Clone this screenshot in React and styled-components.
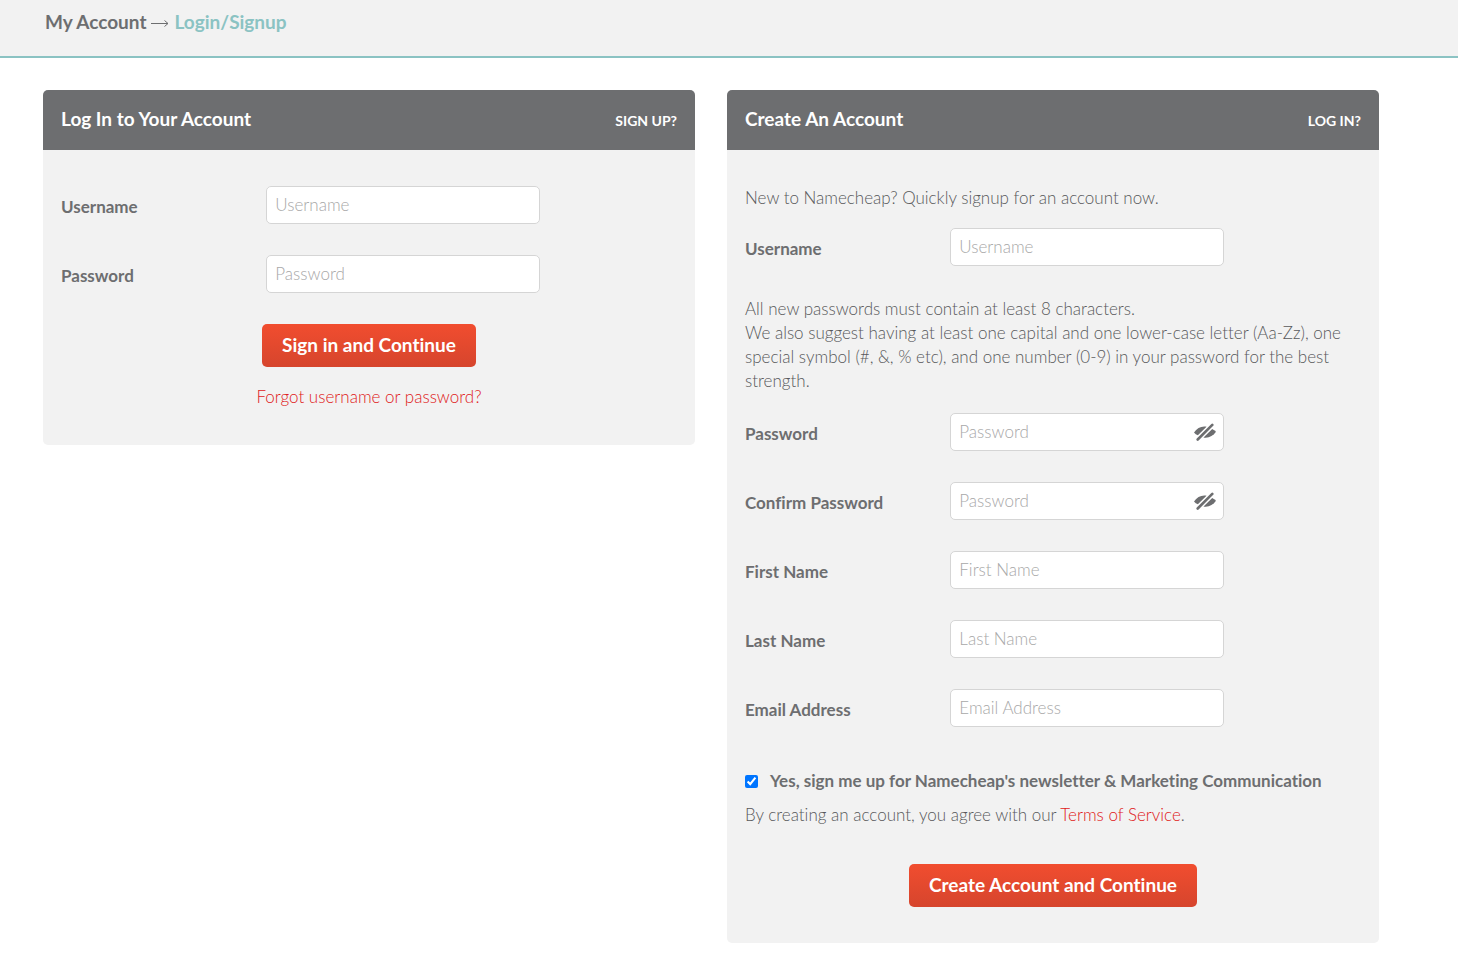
import React, { useState } from "react";
import styled, { createGlobalStyle, ThemeProvider } from "styled-components";

const theme = {
  colors: {
    text: "#6d6e70",
    copy: "#58595b",
    teal: "#8bc3c3",
    panel: "#f2f2f2",
    link: "#e02020",
    border: "#d5d5d5",
    placeholder: "#a8a8a8",
  },
};

const GlobalStyle = createGlobalStyle`
  * {
    box-sizing: border-box;
  }

  body {
    margin: 0;
    background: #ffffff;
    color: #6d6e70;
    font-family: Lato, "Open Sans", sans-serif;
    font-size: 17px;
    font-weight: 300;
    font-variant-ligatures: none;
    line-height: 24px;
  }
`;

const TopBar = styled.header`
  padding: 10px 45px 22px;
  background-color: ${(p) => p.theme.colors.panel};
  border-bottom: 2px solid ${(p) => p.theme.colors.teal};
`;

const Breadcrumb = styled.h1`
  margin: 0;
  font-size: 19px;
  font-weight: 700;
  line-height: 24px;

  span {
    color: ${(p) => p.theme.colors.teal};
  }
`;

const Arrow = styled.svg`
  width: 18px;
  height: 10px;
  margin: 0 5px;
`;

const Columns = styled.main`
  display: grid;
  grid-template-columns: 1fr 1fr;
  align-items: start;
  gap: 32px;
  padding: 32px 79px 31px 43px;

  @media (max-width: 900px) {
    grid-template-columns: 1fr;
    padding: 32px 18px;
  }
`;

const Panel = styled.section`
  overflow: hidden;
  border-radius: 5px;
  background-color: ${(p) => p.theme.colors.panel};
`;

const PanelHeader = styled.div`
  display: flex;
  align-items: baseline;
  justify-content: space-between;
  height: 60px;
  padding: 17px 18px 0;
  background-color: ${(p) => p.theme.colors.text};
  color: #ffffff;
`;

const PanelTitle = styled.h2`
  margin: 0;
  font-size: 19px;
  font-weight: 700;
`;

const SwitchLink = styled.a`
  color: #ffffff;
  font-size: 14px;
  font-weight: 700;
  text-decoration: none;
  text-transform: uppercase;
`;

const Form = styled.form`
  padding: 36px 18px;
`;

const Text = styled.p`
  margin: 0 0 ${(p) => p.$space || 0}px;
  color: ${(p) => p.theme.colors.copy};
`;

const Row = styled.div`
  display: grid;
  grid-template-columns: 3fr 4fr 2fr;
  align-items: center;
  margin-bottom: 31px;
`;

const Label = styled.label`
  padding-top: 4px;
  font-weight: 700;
`;

const InputWrapper = styled.div`
  display: flex;
  align-items: center;
  height: 38px;
  padding-right: 7px;
  border: 1px solid ${(p) => p.theme.colors.border};
  border-radius: 5px;
  background-color: #ffffff;
`;

const Input = styled.input`
  flex: 1;
  min-width: 0;
  height: 36px;
  padding: 0 8px 2px;
  border: 0;
  outline: 0;
  background: transparent;
  color: ${(p) => p.theme.colors.copy};
  font: inherit;

  &::placeholder {
    color: ${(p) => p.theme.colors.placeholder};
    opacity: 1;
  }
`;

const IconButton = styled.button`
  display: flex;
  padding: 0;
  border: 0;
  background: transparent;
  color: ${(p) => p.theme.colors.text};
  cursor: pointer;
`;

const CheckRow = styled.label`
  display: flex;
  align-items: center;
  gap: 12px;
  margin: 42px 0 10px;
  font-weight: 700;
`;

const Checkbox = styled.input`
  width: 13px;
  height: 13px;
  margin: 0;
`;

const Link = styled.a`
  color: ${(p) => p.theme.colors.link};
  text-decoration: none;
`;

const Actions = styled.div`
  display: flex;
  flex-direction: column;
  align-items: center;
  gap: 18px;
`;

const Submit = styled.button`
  height: 43px;
  padding: 0 20px 2px;
  border: 0;
  border-radius: 5px;
  background: linear-gradient(#f14d2f, #d6452d);
  color: #ffffff;
  font-family: inherit;
  font-size: 19px;
  font-weight: 700;
  font-variant-ligatures: none;
  cursor: pointer;
`;

const EyeOff = () => (
  <svg width="22" height="18" viewBox="0 0 22 18" fill="currentColor" aria-hidden="true">
    <path d="M0 9.4C3 5 7.4 2.8 12.6 3.7L3.9 12.3C2.3 11.6 1 10.600 0 9.4Z" />
    <path d="M22 8.8C19 13.2 14.6 15.4 9.4 14.5L18.1 5.9C19.7 6.6 21 7.6 22 8.8Z" />
    <path d="M3.5 16.7L18.5 1.7" stroke="#ffffff" strokeWidth="5" />
    <path d="M3.7 16.5L18.3 1.9" stroke="currentColor" strokeWidth="2.6" strokeLinecap="round" />
  </svg>
);

const Field = ({ id, label, placeholder = label, type = "text", toggle }) => {
  const [visible, setVisible] = useState(false);

  return (
    <Row>
      <Label htmlFor={id}>{label}</Label>
      <InputWrapper>
        <Input id={id} type={visible ? "text" : type} placeholder={placeholder} />
        {toggle && (
          <IconButton type="button" aria-label="Show password" onClick={() => setVisible(!visible)}>
            <EyeOff />
          </IconButton>
        )}
      </InputWrapper>
    </Row>
  );
};

const LoginPanel = () => (
  <Panel id="login">
    <PanelHeader>
      <PanelTitle>Log In to Your Account</PanelTitle>
      <SwitchLink href="#signup">Sign Up?</SwitchLink>
    </PanelHeader>
    <Form onSubmit={(e) => e.preventDefault()}>
      <Field id="login-username" label="Username" />
      <Field id="login-password" label="Password" type="password" />
      <Actions>
        <Submit>Sign in and Continue</Submit>
        <Link href="#forgot">Forgot username or password?</Link>
      </Actions>
    </Form>
  </Panel>
);

const SignupPanel = () => (
  <Panel id="signup">
    <PanelHeader>
      <PanelTitle>Create An Account</PanelTitle>
      <SwitchLink href="#login">Log In?</SwitchLink>
    </PanelHeader>
    <Form onSubmit={(e) => e.preventDefault()}>
      <Text $space={18}>New to Namecheap? Quickly signup for an account now.</Text>
      <Field id="username" label="Username" />
      <Text $space={20}>
        All new passwords must contain at least 8 characters.
        <br />
        We also suggest having at least one capital and one lower-case letter (Aa-Zz), one special
        symbol (#, &amp;, % etc), and one number (0-9) in your password for the best strength.
      </Text>
      <Field id="password" label="Password" type="password" toggle />
      <Field id="confirm" label="Confirm Password" placeholder="Password" type="password" toggle />
      <Field id="first-name" label="First Name" />
      <Field id="last-name" label="Last Name" />
      <Field id="email" label="Email Address" type="email" />
      <CheckRow>
        <Checkbox type="checkbox" defaultChecked />
        Yes, sign me up for Namecheap's newsletter &amp; Marketing Communication
      </CheckRow>
      <Text $space={37}>
        By creating an account, you agree with our <Link href="#terms">Terms of Service</Link>.
      </Text>
      <Actions>
        <Submit>Create Account and Continue</Submit>
      </Actions>
    </Form>
  </Panel>
);

const App = () => (
  <ThemeProvider theme={theme}>
    <GlobalStyle />
    <TopBar>
      <Breadcrumb>
        My Account
        <Arrow viewBox="0 0 18 10" fill="none" stroke="currentColor" aria-hidden="true">
          <path d="M0 4.5H17M13.5 1.5L17 4.5L13.5 7.5" />
        </Arrow>
        <span>Login/Signup</span>
      </Breadcrumb>
    </TopBar>
    <Columns>
      <LoginPanel />
      <SignupPanel />
    </Columns>
  </ThemeProvider>
);

export default App;
